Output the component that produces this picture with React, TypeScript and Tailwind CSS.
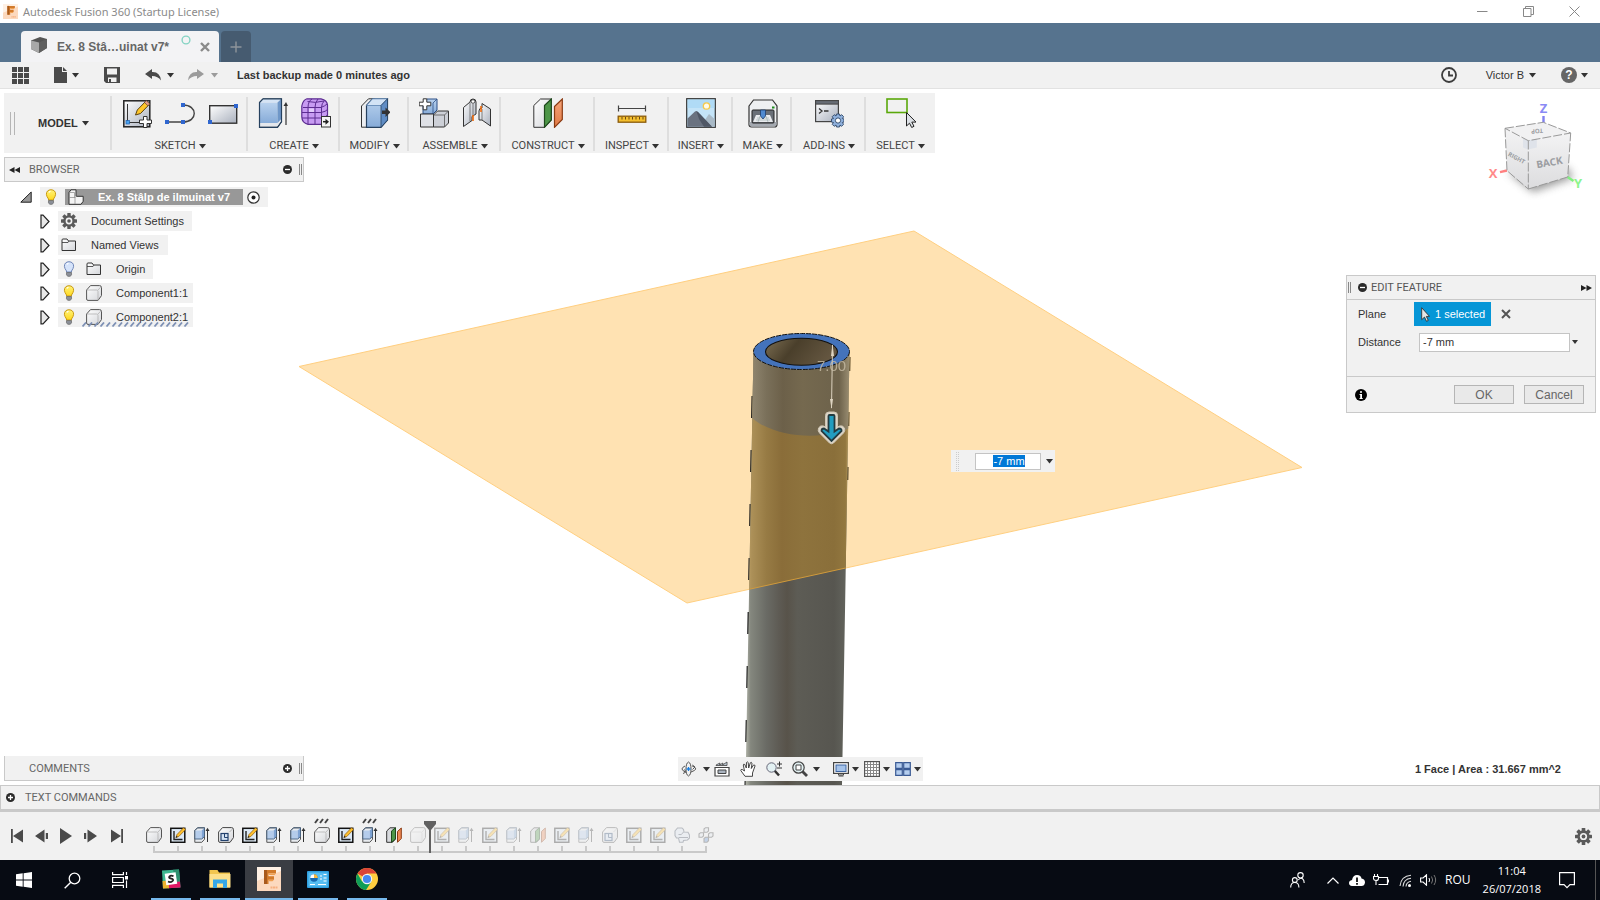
import type { ReactNode } from "react";

const CAPS = "font-['Roboto',sans-serif] text-[11px] leading-[14px]";

type IconProps = { w: number; h?: number; className?: string; children: ReactNode };

function Icon({ w, h = w, className = "", children }: IconProps) {
  return (
    <svg width={w} height={h} viewBox={`0 0 ${w} ${h}`} fill="none" aria-hidden="true" className={`shrink-0 ${className}`}>
      {children}
    </svg>
  );
}

function Caret({ className = "text-[#333]" }: { className?: string }) {
  return (
    <Icon w={7} h={5} className={className}>
      <path d="M0 0h7L3.5 4.5z" fill="currentColor" />
    </Icon>
  );
}

function Gear({ size = 16, color = "#5a5a5a", hole = "#f1f1f1" }) {
  return (
    <svg width={size} height={size} viewBox="0 0 16 16" aria-hidden="true" className="shrink-0">
      <g fill={color}>
        <circle cx="8" cy="8" r="5.8" />
        {[0, 45, 90, 135].map((a) => (
          <rect key={a} x="6.3" y="0" width="3.4" height="16" rx="0.5" transform={`rotate(${a} 8 8)`} />
        ))}
      </g>
      <circle cx="8" cy="8" r="3.4" fill={hole} />
      <circle cx="8" cy="8" r="1.8" fill={color} />
    </svg>
  );
}

function Gradients() {
  return (
    <svg width="0" height="0" className="absolute" aria-hidden="true">
      <defs>
        <linearGradient id="silver" x1="0" y1="0" x2="1" y2="1">
          <stop offset="0" stopColor="#ffffff" />
          <stop offset="1" stopColor="#a9b0bd" />
        </linearGradient>
        <linearGradient id="pale" x1="0" y1="0" x2="1" y2="1">
          <stop offset="0" stopColor="#ffffff" />
          <stop offset="1" stopColor="#d4d6da" />
        </linearGradient>
        <linearGradient id="blueFace" x1="0" y1="0" x2="0" y2="1">
          <stop offset="0" stopColor="#b9d2ee" />
          <stop offset="1" stopColor="#86abd8" />
        </linearGradient>
        <linearGradient id="orangeFace" x1="0" y1="0" x2="0" y2="1">
          <stop offset="0" stopColor="#f6a57a" />
          <stop offset="1" stopColor="#e07a45" />
        </linearGradient>
        <linearGradient id="bulbOn" x1="0" y1="0" x2="0" y2="1">
          <stop offset="0" stopColor="#fff27a" />
          <stop offset="1" stopColor="#ffd91f" />
        </linearGradient>
      </defs>
    </svg>
  );
}

/* ---------- Ribbon icons (30 x 30) ---------- */

function SketchIcon() {
  return (
    <Icon w={30}>
      <rect x="1.8" y="2.8" width="26" height="26" fill="url(#silver)" stroke="#222" strokeWidth="1.5" />
      <path d="M5.5 6v18M6 24.5h12" stroke="#333" />
      <rect x="4" y="22.5" width="3.5" height="3.5" fill="#4aa3f0" stroke="#1b5fae" strokeWidth=".7" />
      <path d="M13.5 17l1.8-5L24 3l3.5 3.2L18.5 15.5z" fill="#ffc629" stroke="#5a4310" />
      <path d="M22.5 4.500L24.200 2.500l3.600 3.400-1.800 1.900z" fill="#e8a08a" stroke="#5a3a2a" strokeWidth=".7" />
      <path d="M21.500 18.500h3.500V22h4.500v3.500H25v4h-3.500v-4H17.500V22h4z" fill="#fff" stroke="#333" />
    </Icon>
  );
}

function LineIcon() {
  return (
    <Icon w={30}>
      <path d="M2 24h16c15 0 15-17 0-17" stroke="#444" strokeWidth="1.4" />
      <path d="M0 22h4v4H0zM16 22h4v4h-4zM16 5h4v4h-4z" fill="#2f66cf" />
    </Icon>
  );
}

function RectIcon() {
  return (
    <Icon w={30}>
      <rect x="1.7" y="7.7" width="27" height="17.5" fill="url(#silver)" stroke="#333" strokeWidth="1.4" />
      <path d="M26 6h4v4h-4zM0 22h4v4H0z" fill="#2f66cf" />
    </Icon>
  );
}

function ExtrudeIcon() {
  return (
    <Icon w={30}>
      <path d="M1.500 4.500L5 .8h18.500v23L19.500 29.300h-18z" fill="#e4e7ec" stroke="#333" />
      <path d="M1.500 4.500h18v20.500h-18z" fill="url(#blueFace)" />
      <path d="M1.500 4.500L5 .8h18.500l-4 3.700z" fill="#d5e4f5" />
      <path d="M19.500 4.500l4-3.700v20l-4 4.200z" fill="#6f97c8" />
      <path d="M1.500 4.500L5 .8h18.500v23L19.500 29.300h-18z" stroke="#26415f" strokeWidth="1.2" />
      <path d="M28 27V6" stroke="#333" strokeWidth="1.2" />
      <path d="M25.500 8L28 4l2 4z" fill="#333" />
    </Icon>
  );
}

function FormIcon() {
  return (
    <Icon w={30}>
      <path d="M6 .8h14q6 1.200 6.500 6v12q-1.500 6-6 7.500H7Q1 25 .8 19V8Q2 2 6 .8z" fill="#c79bf2" stroke="#5c2d91" strokeWidth="1.2" />
      <path d="M2 9.500h18q4-1.500 6-3.500M1 14.500h19q5-1 6.500-3M1 20h19q5-1 6.500-3M6.500 3.500Q14 5.500 23 3M7 26V10q0-7 4-9M14 26V9.500Q14 4 17 1M20.500 26V9.500q0-4 3-7" stroke="#5c2d91" />
      <path d="M8 10.500h5v3.500H8z" fill="#e2ccfa" />
      <rect x="20.5" y="18.5" width="9" height="10.5" fill="#f5f5f5" stroke="#333" />
      <path d="M22 23.700h3" stroke="#222" strokeWidth="1.5" />
      <path d="M24.500 20.700l3.500 3-3.500 3z" fill="#222" />
    </Icon>
  );
}

function ModifyIcon() {
  return (
    <Icon w={30}>
      <path d="M1.500 8L8.500.8h6L9 8v21.200H1.500z" fill="#eceef1" stroke="#333" />
      <path d="M6.500 7.500L12.500.8h15V22l-6.500 7.300H6.500z" fill="url(#blueFace)" stroke="#26415f" strokeWidth="1.2" />
      <path d="M6.500 7.500L12.500.8h15L21 7.500z" fill="#d3e3f5" stroke="#5a81b0" strokeWidth=".8" />
      <path d="M21 7.500l6.500-6.700V22L21 29.300z" fill="#5f8cc4" stroke="#26415f" strokeWidth=".8" />
      <path d="M22 12.500h3.500v-3l5 4.700-5 4.800v-3H22z" fill="#333" />
    </Icon>
  );
}

function AssembleIcon() {
  return (
    <Icon w={30}>
      <path d="M4 5l4-4h10v11l-4 4H4z" fill="url(#blueFace)" stroke="#2c4f86" />
      <path d="M14 5l4-4M14 5v11" stroke="#2c4f86" strokeWidth=".8" />
      <path d="M1.500 16h13v13h-13z" fill="#dfe1e6" stroke="#333" />
      <path d="M14.500 17l4-4h11v12l-4 4h-11z" fill="#cdd0d7" stroke="#333" />
      <path d="M14.500 17h11l4-4M25.500 17v12" stroke="#555" strokeWidth=".8" />
      <path d="M4.200.8h3.600v3.400h4v3.600h-4v4H4.200v-4h-4V4.200h4z" fill="#fff" stroke="#333" />
    </Icon>
  );
}

function JointIcon() {
  return (
    <Icon w={30}>
      <path d="M1.500 9.500L8 4q0-3 3-3t3 3v12l-4 2.500v4L1.500 28.500z" fill="url(#silver)" stroke="#333" />
      <path d="M8 4v19M11 6v11" stroke="#666" strokeWidth=".8" />
      <circle cx="11" cy="3.5" r="1.8" fill="#fff" stroke="#333" strokeWidth=".8" />
      <path d="M11 17v6" stroke="#f26a0a" strokeWidth="1.6" />
      <path d="M17 13q0-3 3-3V5.500L28.500 11v17L20 22h-3z" fill="url(#silver)" stroke="#333" />
      <path d="M20 11v11" stroke="#666" strokeWidth=".8" />
      <path d="M19 8v6" stroke="#f26a0a" strokeWidth="1.6" />
    </Icon>
  );
}

function ConstructIcon() {
  return (
    <Icon w={30}>
      <path d="M.8 7.500L7.500 1h10.800v21l-6.800 7.300H.8z" fill="url(#pale)" stroke="#333" />
      <path d="M11.500 7.500L18.300 1v21l-6.800 7.300z" fill="#4d9648" stroke="#1f4a1d" strokeWidth="1.2" />
      <path d="M21.500 8.500L29.300 1v20.500l-7.800 7.800z" fill="url(#orangeFace)" stroke="#8a3a12" strokeWidth="1.2" />
    </Icon>
  );
}

function InspectIcon() {
  return (
    <Icon w={30}>
      <path d="M1.500 10.500h27M1.500 7.500v6M28.500 7.500v6" stroke="#444" strokeWidth="1.2" />
      <rect x="1.2" y="18.2" width="27.6" height="6" fill="#f4bf2e" stroke="#8a5a0a" strokeWidth="1.3" />
      <path d="M5 19v2.500M8.500 19v2.500M12 19v2.500M15.500 19v2.500M19 19v2.500M22.500 19v2.500M26 19v2.500" stroke="#6a4a10" />
    </Icon>
  );
}

function InsertIcon() {
  return (
    <Icon w={30}>
      <rect x=".7" y=".7" width="28.6" height="28.6" fill="#c4e4f8" stroke="#333" strokeWidth="1.2" />
      <path d="M1.500 1.500h27V10h-27z" fill="#a3d5f5" opacity=".6" />
      <circle cx="20.5" cy="8" r="3.2" fill="#fffbe8" stroke="#f5c84a" strokeWidth="1.3" />
      <path d="M14 29l9-13 5.500 5V29z" fill="#a9bac7" />
      <path d="M1.500 20.500L9 13.500q1.500-1 3 .5L26 28.700H1.500z" fill="#6a7280" />
      <path d="M10.500 13.500L13 21l5 7.700h8L12 14z" fill="#4f5765" />
    </Icon>
  );
}

function MakeIcon() {
  return (
    <Icon w={30}>
      <path d="M1 8l4.500-6h19L29 8v18.500q0 2.500-2.500 2.500h-23Q1 29 1 26.500z" fill="#eef0f2" stroke="#333" strokeWidth="1.2" />
      <path d="M1.500 24h27v2.500q0 2-2 2h-23q-2 0-2-2z" fill="#a4a9b0" />
      <rect x="4" y="12" width="22" height="13" rx="1" fill="#6a7078" stroke="#222" />
      <path d="M8 17h14l3 7H5z" fill="#e9ebee" />
      <path d="M9 20h12M8 22h14M12 18l-2 6M18 18l2 6" stroke="#9aa" strokeWidth=".6" />
      <path d="M12.500 12h5v6l-2.500 3-2.500-3z" fill="#4f8ad0" stroke="#1d3f70" strokeWidth=".8" />
      <rect x="24" y="8.5" width="2.5" height="2" fill="#1c8c1c" />
    </Icon>
  );
}

function AddinsIcon() {
  return (
    <Icon w={30}>
      <rect x="1.6" y="2.6" width="22.8" height="21" fill="url(#silver)" stroke="#444" strokeWidth="1.2" />
      <rect x="1.6" y="2.6" width="22.8" height="3.5" fill="#666c75" stroke="#444" />
      <path d="M5 10.500l3 2.500-3 2.500M10 13h4.500" stroke="#333" strokeWidth="1.3" />
      <g fill="#8fb0dc" stroke="#2c4668" strokeWidth=".9">
        <path d="M22.500 16h3l.5 2 1.700-1.300 2 2L28.300 20.500l1.700.5v3l-1.700.5 1.300 1.800-2 2L26 27l-.5 2h-3l-.5-2-1.800 1.300-2-2 1.300-1.800-2-.5v-3l2-.5-1.300-1.800 2-2L22 18z" />
        <circle cx="24" cy="22.5" r="2.6" fill="#fff" />
      </g>
    </Icon>
  );
}

function SelectIcon() {
  return (
    <Icon w={30}>
      <rect x="1" y="1" width="20" height="13.5" stroke="#5aa80a" strokeWidth="1.6" />
      <path d="M20.500 14.500V28l3-2.800 2.200 4.300 2.300-1.200-2.200-4.200H30z" fill="#dde1e6" stroke="#222" />
    </Icon>
  );
}

/* ---------- Timeline icons (16 x 16) ---------- */

function BodySmall() {
  return (
    <Icon w={16}>
      <path d="M.6 5L4.500.6h9q2 0 2 2v8L12 15.400H2Q.6 15.400.6 14z" fill="url(#pale)" stroke="#555" />
      <path d="M.6 5h10q1.400 0 1.400 1.500v9M12 5l3.300-3.500" stroke="#aaa" strokeWidth=".7" />
    </Icon>
  );
}

function SketchSmall() {
  return (
    <Icon w={16}>
      <rect x=".8" y="1.3" width="14" height="14" fill="#dde9f5" stroke="#111" strokeWidth="1.5" />
      <path d="M4 4v8.500h8.500" stroke="#222" strokeWidth="1.4" />
      <path d="M6 10.500l1-3L13.500.8l2 1.800L8.800 9.500z" fill="#ffc02e" stroke="#8a5a0a" strokeWidth=".7" />
      <path d="M5.500 11l1-2.200 1.200 1.200z" fill="#222" />
    </Icon>
  );
}

function ExtrudeSmall() {
  return (
    <Icon w={16}>
      <path d="M.8 3.500L3.500.8h7v11.500L7.800 15.300h-7z" fill="#e8ebef" stroke="#555" />
      <path d="M1.300 3.500h6.500v8.500H1.300z" fill="#b4cceb" />
      <path d="M7.800 3.500L10.500.8v8.700L7.800 12z" fill="#7ea3d3" />
      <path d="M.8 12V3.500L3.500.8h7V9.500L7.800 12z" stroke="#46617f" strokeWidth=".9" />
      <path d="M13.500 15V3" stroke="#333" />
      <path d="M11.500 4l2-3.300 2 3.300z" fill="#333" />
    </Icon>
  );
}

function ShellSmall() {
  return (
    <Icon w={16}>
      <path d="M.6 5L4.500.6h9q2 0 2 2v8L12 15.400H2Q.6 15.400.6 14z" fill="url(#pale)" stroke="#444" />
      <path d="M11.500 5l3.500-3.500" stroke="#999" strokeWidth=".7" />
      <rect x="3" y="6.5" width="7" height="7" fill="#d5e3f3" stroke="#22406c" strokeWidth="1.2" />
      <path d="M6.500 7v3.500H10" stroke="#22406c" />
    </Icon>
  );
}

function ConstructSmall() {
  return (
    <Icon w={16}>
      <path d="M.7 4L4 .8h5.500V12L6.500 15.300H.7z" fill="#d8dade" stroke="#333" />
      <path d="M5.500 4L9.500.8V12l-4 3.300z" fill="#4d9648" stroke="#1f4a1d" />
      <path d="M11.500 4.500L15.300 1v10.500l-3.800 3.800z" fill="#ee8a56" stroke="#8a3a12" />
    </Icon>
  );
}

function CombineSmall() {
  return (
    <Icon w={16}>
      <path d="M1 4l2.500-3h4.500q2 1 2 4l4 .3 1.500 2.700v3l-2 2-4 .5L9 15.300H5.500L4.500 11H2.500L1 8.500z" fill="#dce6f3" stroke="#3a4658" strokeWidth="1.1" />
      <path d="M4.500 7.500q3 1.500 5-2.500M5 10.500h9" stroke="#3a4658" />
    </Icon>
  );
}

function PatternSmall() {
  return (
    <Icon w={16}>
      <g fill="#e2e8f0" stroke="#333" strokeWidth="1.1">
        <path d="M6 2l1.500-1.300h3V4L9 5.300H6z" />
        <path d="M1 7l1.500-1.300h3V9L4 10.300H1z" />
        <path d="M10.500 7L12 5.700h3V9l-1.500 1.300h-3z" />
        <path d="M6 11.500l1.500-1.300h3v3.500L9 15.300H6z" fill="#5f8ed0" />
      </g>
    </Icon>
  );
}

const FEATURES = {
  body: BodySmall,
  sketch: SketchSmall,
  extrude: ExtrudeSmall,
  shell: ShellSmall,
  construct: ConstructSmall,
  combine: CombineSmall,
  pattern: PatternSmall,
};

const TIMELINE: { kind: keyof typeof FEATURES; dashed?: boolean; marker?: boolean; faded?: boolean }[] = [
  { kind: "body" },
  { kind: "sketch" },
  { kind: "extrude" },
  { kind: "shell" },
  { kind: "sketch" },
  { kind: "extrude" },
  { kind: "extrude" },
  { kind: "body", dashed: true },
  { kind: "sketch" },
  { kind: "extrude", dashed: true },
  { kind: "construct" },
  { kind: "body", faded: true, marker: true },
  { kind: "sketch", faded: true },
  { kind: "extrude", faded: true },
  { kind: "sketch", faded: true },
  { kind: "extrude", faded: true },
  { kind: "construct", faded: true },
  { kind: "sketch", faded: true },
  { kind: "extrude", faded: true },
  { kind: "shell", faded: true },
  { kind: "sketch", faded: true },
  { kind: "sketch", faded: true },
  { kind: "combine", faded: true },
  { kind: "pattern", faded: true },
];

/* ---------- Header ---------- */

function FusionLogo({ size }: { size: number }) {
  return (
    <svg width={size} height={size} viewBox="0 0 24 24" aria-hidden="true" className="shrink-0">
      <rect width="24" height="24" fill="#fef0e4" />
      <path d="M0 14L24 4v20H0z" fill="#fbcfae" opacity=".7" />
      <path d="M7 3h12v3.500h-7.500V9.300H17v3.500h-5.500V17H7z" fill="#d27a2a" />
      <path d="M7 3h3v14H7z" fill="#a85a1c" />
      <path d="M11.500 6.500H19l-1.500 1.500h-6zM11.500 12.800H17L15.500 14.300h-4z" fill="#f0a050" />
      <path d="M13.500 19.500h2v2h-2zM16 19.500h2v2h-2zM18.500 19.500h2v2h-2z" fill="#f6b080" />
    </svg>
  );
}

function TitleBar() {
  return (
    <header className="flex h-[23px] items-center bg-white pl-[3px]">
      <FusionLogo size={15} />
      <h1 className="ml-[5px] flex-1 font-['Noto_Sans',sans-serif] text-[11px] leading-4 text-[#8a8a8a]">
        Autodesk Fusion 360 (Startup License)
      </h1>
      <div className="flex pr-[3px]">
        <button aria-label="Minimize" className="flex h-5 w-[46px] items-center justify-center">
          <Icon w={11}><path d="M0 5.500h10.500" stroke="#888" /></Icon>
        </button>
        <button aria-label="Restore" className="flex h-5 w-[46px] items-center justify-center">
          <Icon w={11}><path d="M.5 2.500h7.500v8H.5zM2.500 2.500v-2h8v8H8" stroke="#888" /></Icon>
        </button>
        <button aria-label="Close" className="flex h-5 w-[46px] items-center justify-center">
          <Icon w={11}><path d="M.5.500l10 10M10.500.500l-10 10" stroke="#888" /></Icon>
        </button>
      </div>
    </header>
  );
}

function TabBar() {
  return (
    <div className="flex h-[39px] items-end gap-0.5 bg-[#56738e] pl-[21px]">
      <div className="flex h-[31px] w-[198px] items-center rounded-t bg-[#f3f3f5] pl-[10px] pr-2">
        <Icon w={16} className="mb-1">
          <path d="M0 3.500L9 0l7 2v9l-8 5-8-4z" fill="#555" />
          <path d="M0 3.500l8 2V16l-8-4z" fill="#a8a8a8" />
          <path d="M8 5.500L16 2v9l-8 5z" fill="#5f5f5f" />
        </Icon>
        <span className="ml-[10px] flex-1 whitespace-nowrap text-xs font-bold text-[#666]">Ex. 8 Stâ…uinat v7*</span>
        <Icon w={10} className="mb-[14px] mr-2"><circle cx="5" cy="5" r="3.9" stroke="#85d3c3" strokeWidth="1.4" /></Icon>
        <button aria-label="Close tab">
          <Icon w={12}><path d="M2 2l8 8M10 2l-8 8" stroke="#8a8a8a" strokeWidth="2.4" /></Icon>
        </button>
      </div>
      <button aria-label="New tab" className="flex h-[31px] w-[30px] items-center justify-center rounded-t bg-[#465b70]">
        <Icon w={12}><path d="M6 .5v11M.5 6h11" stroke="#8f959b" strokeWidth="1.4" /></Icon>
      </button>
    </div>
  );
}

function QuickBar() {
  return (
    <div className="flex h-[27px] items-center border-b border-[#e2e2e2] bg-[#f1f1f1] px-3 text-[11px] text-[#333]">
      <button aria-label="Data panel">
        <Icon w={17}><path d="M0 0h5v5H0zM6 0h5v5H6zM12 0h5v5h-5zM0 6h5v5H0zM6 6h5v5H6zM12 6h5v5h-5zM0 12h5v5H0zM6 12h5v5H6zM12 12h5v5h-5z" fill="#4a4a4a" /></Icon>
      </button>
      <button aria-label="File" className="ml-[25px] flex items-center gap-[5px]">
        <Icon w={13} h={16}><path d="M0 0h8v5h5v11H0zM9 0l4 4H9z" fill="#4a4a4a" /></Icon>
        <Caret />
      </button>
      <button aria-label="Save" className="ml-[25px]">
        <Icon w={16}><path d="M0 0h16v16H2l-2-2zM3 1.500v6h10v-6zM4 10.500v4.500h8.500v-4.500z" fill="#4a4a4a" fillRule="evenodd" /><path d="M5 12h2v3H5z" fill="#4a4a4a" /></Icon>
      </button>
      <button aria-label="Undo" className="ml-[25px] flex items-center gap-1.5">
        <Icon w={16} h={12}><path d="M0 5L7 0v3q8-.5 9 8.500Q13 7 7 7v3z" fill="#4a4a4a" /></Icon>
        <Caret />
      </button>
      <button aria-label="Redo" className="ml-[14px] flex items-center gap-[7px]">
        <Icon w={16} h={12}><path d="M16 5L9 0v3Q1 2.500 0 11.500 3 7 9 7v3z" fill="#9b9b9b" /></Icon>
        <Caret className="text-[#9b9b9b]" />
      </button>
      <p className="ml-[19px] flex-1 font-bold">Last backup made 0 minutes ago</p>
      <button aria-label="Job status">
        <Icon w={16}><circle cx="8" cy="8" r="7" stroke="#3d3d3d" strokeWidth="1.8" /><path d="M8 4v4.500h4" stroke="#3d3d3d" strokeWidth="1.8" /></Icon>
      </button>
      <button className="ml-[29px] flex items-center gap-[5px]">Victor B<Caret /></button>
      <button aria-label="Help" className="ml-[25px] flex items-center gap-1">
        <span className="flex size-4 items-center justify-center rounded-full bg-[#666] text-xs font-bold text-white">?</span>
        <Caret />
      </button>
    </div>
  );
}

function Group({ label, width, icons }: { label: string; width: string; icons: ReactNode[] }) {
  return (
    <div className={`relative flex flex-col items-center justify-between pt-[5px] after:absolute after:right-0 after:top-1 after:h-[54px] after:w-0.5 after:bg-[#dedede] last:after:hidden ${width}`}>
      <div className="flex gap-[13px]">
        {icons.map((icon, i) => (
          <button key={i} aria-label={`${label} tool ${i + 1}`}>{icon}</button>
        ))}
      </div>
      <button className={`flex items-center gap-[3px] text-[#444] ${CAPS}`}>
        {label}
        <Caret />
      </button>
    </div>
  );
}

function Ribbon() {
  return (
    <nav aria-label="Toolbar" className="flex h-[60px] w-fit bg-[#f1f1f1]">
      <div className="my-[3px] flex w-[108px] items-center border-r-2 border-[#dedede] pl-1.5">
        <span className="h-[23px] w-[5px] border-x border-[#b5b5b5]" />
        <button className="ml-[23px] flex items-center gap-1 text-[11px] font-bold text-[#333]">MODEL<Caret /></button>
      </div>
      <Group label="SKETCH" width="w-[136px]" icons={[<SketchIcon />, <LineIcon />, <RectIcon />]} />
      <Group label="CREATE" width="w-[92px]" icons={[<ExtrudeIcon />, <FormIcon />]} />
      <Group label="MODIFY" width="w-[69px]" icons={[<ModifyIcon />]} />
      <Group label="ASSEMBLE" width="w-[92px]" icons={[<AssembleIcon />, <JointIcon />]} />
      <Group label="CONSTRUCT" width="w-[94px]" icons={[<ConstructIcon />]} />
      <Group label="INSPECT" width="w-[74px]" icons={[<InspectIcon />]} />
      <Group label="INSERT" width="w-[64px]" icons={[<InsertIcon />]} />
      <Group label="MAKE" width="w-[59px]" icons={[<MakeIcon />]} />
      <Group label="ADD-INS" width="w-[74px]" icons={[<AddinsIcon />]} />
      <Group label="SELECT" width="w-[69px]" icons={[<SelectIcon />]} />
    </nav>
  );
}

/* ---------- Browser tree ---------- */

function RoundSign({ plus = false }: { plus?: boolean }) {
  return (
    <Icon w={9}>
      <circle cx="4.5" cy="4.5" r="4.5" fill="#2b2b2b" />
      <path d={plus ? "M2 4.5h5M4.5 2v5" : "M2 4.5h5"} stroke="#fff" strokeWidth="1.3" />
    </Icon>
  );
}

function Grip() {
  return <span className="h-[11px] w-[3px] border-x border-[#888]" />;
}

function Bulb({ on = true }: { on?: boolean }) {
  return (
    <Icon w={12} h={16}>
      <path d="M6 .7q4.600.3 4.600 4.600Q10.400 7.500 8.500 10v1h-5v-1Q1.600 7.500 1.400 5.300 1.400 1 6 .7z" fill={on ? "url(#bulbOn)" : "#d5e3fa"} stroke={on ? "#c99a12" : "#6f86b8"} />
      <path d="M3.500 11.500h5v2.300L7.300 15.300H4.700L3.500 13.800z" fill="#8b8f98" stroke="#555" strokeWidth=".6" />
      <path d="M4 3.500q.5-1 1.500-1.300" stroke="#fff" strokeWidth="1.2" />
    </Icon>
  );
}

function Folder() {
  return (
    <Icon w={16} h={14}>
      <path d="M1 12.500V2q0-1 1-1h4l1.500 2H14.500v9.500z" fill="url(#pale)" stroke="#333" />
      <path d="M1 4.500h6L8 3" stroke="#333" strokeWidth=".8" />
    </Icon>
  );
}

function Expand() {
  return (
    <button aria-label="Expand" className="mr-2 flex w-[10px] justify-center">
      <Icon w={10} h={15}><path d="M1 1.200h2l6 6.300-6 6.300H1z" fill="#e8e8e8" stroke="#222" strokeWidth="1.2" /></Icon>
    </button>
  );
}

function TreeRow({ width, children }: { width: string; children: ReactNode }) {
  return (
    <li className="flex h-6 items-center">
      <Expand />
      <div className={`flex h-5 items-center bg-[#f1f1f1] ${width}`}>{children}</div>
    </li>
  );
}

function BrowserPanel() {
  return (
    <section className="w-[300px]">
      <div className="flex h-[25px] items-center border border-[#c9c9c9] bg-[#f1f1f1] pl-1 pr-px">
        <Icon w={11} h={6}><path d="M5.500 0v6L0 3zM11 0v6L5.500 3z" fill="#222" /></Icon>
        <h2 className={`ml-[9px] flex-1 text-[#666] ${CAPS}`}>BROWSER</h2>
        <button aria-label="Collapse browser" className="mr-[7px]"><RoundSign /></button>
        <Grip />
      </div>
      <ul className="pt-[3px] text-[11px] text-[#333]">
        <li className="flex h-6 items-center pl-4">
          <button aria-label="Collapse" className="mr-2">
            <Icon w={12}><path d="M.8 11.200L11.200 1v10.200z" fill="#999" stroke="#222" /></Icon>
          </button>
          <div className="flex h-5 w-[228px] items-center bg-[#f1f1f1] pl-[5px]">
            <Bulb />
            <div className="ml-2 flex h-4 w-[178px] items-center bg-[#989898] pl-[3px]">
              <Icon w={16}>
                <path d="M1 3.500L3 .8h5v6.500h7.200v5L13 15.300H1z" fill="#f4f4f4" stroke="#333" />
                <path d="M1 8.500h6V15M7 8.500l2-1.500M1 3.500h5.500V8.500" stroke="#888" strokeWidth=".7" />
              </Icon>
              <span className="ml-3.5 whitespace-nowrap font-bold text-white">Ex. 8 Stâlp de ilmuinat v7</span>
            </div>
            <button aria-label="Activate component" className="ml-1">
              <Icon w={13}><circle cx="6.5" cy="6.5" r="5.7" fill="#fff" stroke="#333" strokeWidth="1.2" /><circle cx="6.5" cy="6.5" r="2" fill="#222" /></Icon>
            </button>
          </div>
        </li>
        <li>
          <ul className="pl-9">
            <TreeRow width="w-[134px]">
              <span className="ml-[3px] mr-3.5"><Gear /></span>
              Document Settings
            </TreeRow>
            <TreeRow width="w-[110px]">
              <span className="ml-[3px] mr-3.5"><Folder /></span>
              Named Views
            </TreeRow>
            <TreeRow width="w-[95px]">
              <span className="ml-[5px] mr-[11px]"><Bulb on={false} /></span>
              <span className="mr-3.5"><Folder /></span>
              Origin
            </TreeRow>
            <TreeRow width="w-[135px]">
              <span className="ml-[5px] mr-[11px]"><Bulb /></span>
              <span className="mr-3.5"><BodySmall /></span>
              Component1:1
            </TreeRow>
            <TreeRow width="w-[135px]">
              <span className="ml-[5px] mr-[11px]"><Bulb /></span>
              <span className="relative flex items-center">
                <span className="mr-3.5"><BodySmall /></span>
                Component2:1
                <svg width="108" height="5" viewBox="0 0 108 5" className="absolute -bottom-0.5 -left-1" aria-hidden="true">
                  {Array.from({ length: 18 }, (_, i) => (
                    <path key={i} d={`M${i * 6 + 0.5} 4.5l3.5-4`} stroke="#7d90b5" strokeWidth="1.8" />
                  ))}
                </svg>
              </span>
            </TreeRow>
          </ul>
        </li>
      </ul>
    </section>
  );
}

/* ---------- Scene ---------- */

function Scene() {
  const body = "M753.500 351.500C753.500 361.500 775 369.700 801.500 369.700S849.500 361.500 849.500 351.500L842 785H745.500z";
  const planePoly = "914,231 1302,467.500 687,603 299,366.500";
  return (
    <svg viewBox="0 89 1600 696" preserveAspectRatio="xMidYMid slice" className="absolute inset-0 size-full" role="img" aria-label="Pipe model with offset plane">
      <defs>
        <linearGradient id="steel">
          <stop offset="0" stopColor="#b3b5aa" />
          <stop offset=".05" stopColor="#84877e" />
          <stop offset=".2" stopColor="#6a6b65" />
          <stop offset=".32" stopColor="#5e5b54" />
          <stop offset=".4" stopColor="#58534a" />
          <stop offset=".5" stopColor="#5d5c55" />
          <stop offset=".85" stopColor="#575650" />
          <stop offset=".96" stopColor="#62635c" />
          <stop offset="1" stopColor="#c0c1b9" />
        </linearGradient>
        <linearGradient id="gold">
          <stop offset="0" stopColor="#c4a66b" />
          <stop offset=".06" stopColor="#ac9058" />
          <stop offset=".2" stopColor="#977b44" />
          <stop offset=".35" stopColor="#8a6d39" />
          <stop offset=".55" stopColor="#8e733d" />
          <stop offset=".85" stopColor="#8a6f3a" />
          <stop offset=".96" stopColor="#92773f" />
          <stop offset="1" stopColor="#c0a262" />
        </linearGradient>
        <linearGradient id="khaki">
          <stop offset="0" stopColor="#a2977d" />
          <stop offset=".06" stopColor="#908670" />
          <stop offset=".2" stopColor="#7a705a" />
          <stop offset=".36" stopColor="#6c6049" />
          <stop offset=".55" stopColor="#75694f" />
          <stop offset=".9" stopColor="#6d624b" />
          <stop offset="1" stopColor="#9a8e72" />
        </linearGradient>
        <linearGradient id="bore" x1="0" y1="0" x2="1" y2=".3">
          <stop offset="0" stopColor="#7d6f53" />
          <stop offset=".45" stopColor="#4a3f2b" />
          <stop offset="1" stopColor="#645640" />
        </linearGradient>
        <clipPath id="inPlane"><polygon points={planePoly} /></clipPath>
        <clipPath id="aboveCut"><path d="M740 330H860V422C838 440 780 442 752 418H740z" /></clipPath>
      </defs>
      <polygon points={planePoly} fill="#ffe2b2" stroke="#ffcf80" />
      <path d="M752.500 396L745.500 785" stroke="#111" strokeWidth="2" strokeDasharray="22 32" />
      <path d="M849.500 357L847.300 480" stroke="#3a2a0a" strokeWidth="2" strokeDasharray="14 41" />
      <path d={body} fill="url(#steel)" />
      <path d={body} fill="url(#gold)" clipPath="url(#inPlane)" />
      <path d={body} fill="url(#khaki)" clipPath="url(#aboveCut)" />
      <path d="M749.500 589.200L845.700 568" stroke="#d09a3c" />
      <ellipse cx="801.5" cy="351.5" rx="48" ry="18" fill="#4473bb" stroke="#111" strokeWidth="1" strokeDasharray="5 1" />
      <ellipse cx="801.5" cy="351.7" rx="36" ry="13.5" fill="url(#bore)" stroke="#111" strokeWidth="1.1" />
      <path d="M832.500 345L831.500 408" stroke="#ddd3c0" />
      <path d="M832.500 344l1.500 12h-3zM831.500 409l-1.500-10h3z" fill="#ddd3c0" />
      <text x="817" y="371" fill="#c8bda6" opacity=".8" fontFamily="Liberation Sans, sans-serif" fontSize="15">7.00</text>
      <path d="M829 412h5q3.500 0 3.500 3.500v11.500l2-1q3-1 5 2 1 3-1 5l-10 10q-2 1.500-4 0l-10-10q-2-2-1-5 2-3 5-2l2 1v-11.500q0-3.500 3.500-3.500z" fill="#ddd6c8" stroke="#cfc6b5" />
      <path d="M829.500 415h4q1 0 1 1v15.500l4.500-3q3 0 2.500 2.500l-10 10-10-10q0-2.500 2.500-2.500l4.500 3V416q0-1 1-1z" fill="#219dc0" stroke="#233b40" strokeWidth="1.8" />
    </svg>
  );
}

function ViewCube() {
  return (
    <svg width="110" height="110" viewBox="1480 95 110 110" className="absolute right-2.5 top-1.5" role="img" aria-label="View cube">
      <defs>
        <filter id="soft" x="-30%" y="-30%" width="160%" height="160%"><feGaussianBlur stdDeviation="4" /></filter>
        <linearGradient id="cubeSide" x1="0" y1="0" x2="0" y2="1">
          <stop offset="0" stopColor="#f3f3f4" />
          <stop offset="1" stopColor="#dcdcde" />
        </linearGradient>
      </defs>
      <path d="M1508 172l25 20 40-14-5-10z" fill="#777" filter="url(#soft)" opacity=".75" />
      <path d="M1543.500 123v-7" stroke="#8080f0" strokeWidth="2.4" />
      <path d="M1507 170.500l-7 1.700" stroke="#ff8080" strokeWidth="2.4" />
      <path d="M1567.500 177l6 4" stroke="#80f080" strokeWidth="2.4" />
      <path d="M1505 128.300L1543.300 122.300 1570.700 133 1528.300 140.700z" fill="#f1f1f2" />
      <path d="M1505 128.300L1528.300 140.700V189L1507 170.700z" fill="url(#cubeSide)" />
      <path d="M1528.300 140.700L1570.700 133 1567.700 177 1528.300 189z" fill="url(#cubeSide)" />
      <path d="M1523 138.500l5.300 2 8.500-2v9l-8.500 2-5.300-2z" fill="#dfe3ea" />
      <path d="M1505 128.300L1543.300 122.300 1570.700 133 1528.300 140.700zM1505 128.300L1507 170.700 1528.300 189V140.700M1528.300 189L1567.700 177 1570.700 133" fill="none" stroke="#999" strokeDasharray="9 2" />
      <g fontFamily="Open Sans, sans-serif" fontWeight="700" fill="#9b9da1" textAnchor="middle">
        <text x="1549.5" y="166" fontSize="10" transform="rotate(-10 1549.5 163)">BACK</text>
        <text x="1516.5" y="160" fontSize="6" transform="rotate(28 1516.5 158)">RIGHT</text>
        <text x="1537" y="133" fontSize="6" transform="rotate(176 1537 131)">TOP</text>
      </g>
      <g fontFamily="Open Sans, sans-serif" fontSize="13" fontWeight="700" textAnchor="middle">
        <text x="1543.5" y="113" fill="#8a8af5">Z</text>
        <text x="1493" y="178" fill="#ff8a8a">X</text>
        <text x="1578" y="188" fill="#8cf58c">Y</text>
      </g>
    </svg>
  );
}

function EditFeature() {
  return (
    <form className="absolute right-1 top-[186px] w-[250px] border border-[#c9c9c9] bg-[#f1f1f1] text-[11px] text-[#333]" onSubmit={(e) => e.preventDefault()}>
      <div className="flex h-6 items-center border-b border-[#c9c9c9] pl-px pr-[3px]">
        <Grip />
        <span className="ml-[7px]"><RoundSign /></span>
        <h2 className={`ml-1 flex-1 text-[#555] ${CAPS}`}>EDIT FEATURE</h2>
        <Icon w={11} h={6}><path d="M0 0v6l5.500-3zM5.500 0v6L11 3z" fill="#222" /></Icon>
      </div>
      <div className="grid h-[76px] grid-cols-[56px_1fr] content-start gap-y-1 pl-[11px] pt-0.5">
        <span className="self-center">Plane</span>
        <div className="flex items-center">
          <button type="button" className="flex h-6 w-[77px] items-center gap-[5px] bg-[#0696d7] pl-[7px] text-white">
            <Icon w={9} h={15}><path d="M.7.700v12l2.800-2.600 2 4.200 1.800-.9-2-4h3.200z" fill="#e6e6e6" stroke="#333" strokeWidth=".9" /></Icon>
            1 selected
          </button>
          <button type="button" aria-label="Clear selection" className="ml-2.5">
            <Icon w={10}><path d="M1 1l8 8M9 1l-8 8" stroke="#555" strokeWidth="2" /></Icon>
          </button>
        </div>
        <label htmlFor="distance" className="self-center">Distance</label>
        <div className="flex h-6 items-center gap-0.5 pl-[5px]">
          <input id="distance" defaultValue="-7 mm" className="h-[19px] w-[151px] border border-[#c4c4c4] bg-white px-[3px] outline-none" />
          <Icon w={6} h={4}><path d="M0 0h6L3 4z" fill="#333" /></Icon>
        </div>
      </div>
      <div className="flex h-9 items-center gap-[10px] border-t border-[#c9c9c9] pl-2 pr-[11px]">
        <Icon w={12} className="mr-auto">
          <circle cx="6" cy="6" r="6" fill="#000" />
          <path d="M5 2.200h2v1.600H5zM4.500 5H7v4h.7v.9H4.500V9h.7V5.900h-.7z" fill="#fff" />
        </Icon>
        <button type="submit" className="h-[19px] w-[60px] border border-[#b5b5b5] bg-[#e9e9e9] text-xs leading-4 text-[#666]">OK</button>
        <button type="button" className="h-[19px] w-[60px] border border-[#b5b5b5] bg-[#e9e9e9] text-xs leading-4 text-[#666]">Cancel</button>
      </div>
    </form>
  );
}

function FloatingInput() {
  return (
    <div className="absolute left-[calc(50%+151px)] top-[361px] flex h-[22px] w-[104px] items-center bg-[#f1f1f1] text-[11px] text-[#333]">
      <span className="ml-[5px] h-[19px] w-[3px] border-x border-dotted border-[#ccc]" />
      <input
        aria-label="Offset distance"
        defaultValue="-7 mm"
        autoFocus
        onFocus={(e) => e.currentTarget.select()}
        className="ml-4 h-[17px] w-[66px] border border-[#c4c4c4] bg-white pl-0.5 text-center outline-none selection:bg-[#0078d7] selection:text-white"
      />
      <Caret className="ml-[5px] text-[#333]" />
    </div>
  );
}

/* ---------- Bottom of the canvas ---------- */

function NavBar() {
  return (
    <div className="flex h-6 w-[245px] items-center bg-[#f1f1f1] pl-[3px]">
      <button aria-label="Orbit" className="flex items-center gap-1.5">
        <Icon w={16}>
          <path d="M7.500 1q2.500 1 2.500 7t-2.500 7Q5 14 5 8t2.500-7z" stroke="#555" />
          <path d="M4 5Q-2 8 4 10.800M11 4.800q8 3.200-1 6.200M11.500 4l2.500 2-2.500 2.500M3.500 8.500L5 11l-3 1.500" stroke="#555" />
          <path d="M5.500 8h4M7.500 6v4" stroke="#1b7fe0" strokeWidth="1.3" />
        </Icon>
        <Caret />
      </button>
      <button aria-label="Look at" className="ml-1">
        <Icon w={16}>
          <path d="M1 15V6.500h14V15z" fill="#fff" stroke="#444" strokeWidth="1.2" />
          <path d="M2 4l4-2-.5 2L9 2l-.5 2L13 1v3.500H2z" fill="#bcc8d4" stroke="#444" strokeWidth=".8" />
          <path d="M4 9h8v3.500H4z" fill="#aab4c0" stroke="#444" />
        </Icon>
      </button>
      <button aria-label="Pan" className="ml-[10px]">
        <Icon w={16}>
          <path d="M5 15.300L.8 9.500q0-1.500 1.500-1L4.500 10 3.300 4q.3-1.500 1.500-.5L6.300 7 6.500 1.500Q7.300.2 8.200 1.500L8.700 7 10.300 1.800q1-1 1.700.2L11.300 7.500 13.500 4q1.500-.5 1.500 1L12.500 12v3.300z" fill="#fff" stroke="#333" strokeWidth=".9" />
        </Icon>
      </button>
      <button aria-label="Zoom" className="ml-[10px]">
        <Icon w={16}>
          <path d="M8.500 9.500l4.500 5" stroke="#333" strokeWidth="2.5" />
          <circle cx="5.5" cy="6.5" r="4.7" fill="#e3f1f3" stroke="#667" />
          <path d="M11 3h5M13.500.5v5M11 7h5" stroke="#333" />
        </Icon>
      </button>
      <button aria-label="Fit" className="ml-[10px] flex items-center gap-[5px]">
        <Icon w={16}>
          <path d="M10 10l5 5" stroke="#444" strokeWidth="2.8" />
          <circle cx="6.5" cy="6.5" r="5.7" fill="#e3f1f3" stroke="#444" strokeWidth="1.2" />
          <path d="M4 4h5v5H4z" fill="#fff" stroke="#444" />
        </Icon>
        <Caret />
      </button>
      <button aria-label="Display settings" className="ml-[13px] flex items-center gap-[3px]">
        <Icon w={16}>
          <rect x=".6" y="1.6" width="14.8" height="10.8" fill="#fff" stroke="#444" strokeWidth="1.2" />
          <rect x="3" y="4" width="10" height="6.5" fill="#a5c3ea" stroke="#3d64a0" />
          <path d="M5.500 12.500v1.500h5v-1.500M5.500 15h5" stroke="#444" />
        </Icon>
        <Caret />
      </button>
      <button aria-label="Grid and snaps" className="ml-[5px] flex items-center gap-[3px]">
        <Icon w={16}>
          <rect x=".6" y=".6" width="14.8" height="14.8" fill="#fff" stroke="#555" strokeWidth="1.2" />
          <path d="M3.500 1v14M6.500 1v14M9.500 1v14M12.500 1v14M1 3.500h14M1 6.500h14M1 9.500h14M1 12.500h14" stroke="#888" />
        </Icon>
        <Caret />
      </button>
      <button aria-label="Viewports" className="ml-[5px] flex items-center gap-[3px]">
        <Icon w={16}>
          <path d="M.7 1.700h6.600v5.600H.7zM8.700 1.700h6.600v5.600H8.700zM.7 8.700h6.600v5.600H.7zM8.700 8.700h6.600v5.600H8.700z" fill="#b4cdee" stroke="#3a5a94" strokeWidth="1.2" />
        </Icon>
        <Caret />
      </button>
    </div>
  );
}

function CanvasFooter() {
  return (
    <div className="relative grid grid-cols-[1fr_auto_1fr] items-end pb-1">
      <div className="ml-1 flex h-[25px] w-[300px] items-center border-x border-b border-[#c9c9c9] bg-[#f1f1f1] pl-6 pr-px pt-px">
        <h2 className={`flex-1 text-[#666] ${CAPS}`}>COMMENTS</h2>
        <button aria-label="Open comments" className="mr-[7px]"><RoundSign plus /></button>
        <Grip />
      </div>
      <NavBar />
      <p className="self-center pr-[39px] text-right text-[11px] font-bold leading-4 text-[#333]">1 Face | Area : 31.667 mm^2</p>
    </div>
  );
}

/* ---------- Timeline ---------- */

function Timeline() {
  return (
    <section aria-label="Timeline" className="flex h-12 items-start bg-[#f1f1f1] pl-[11px] pr-2">
      <div className="flex h-12 items-center text-[#4a4a4a]">
        <button aria-label="Go to start" className="mr-3"><Icon w={12} h={14}><path d="M0 0h1.800v14H0zM12 .5v13L2 7z" fill="currentColor" /></Icon></button>
        <button aria-label="Step back" className="mr-3"><Icon w={13} h={14}><path d="M9.500.5v13L0 7zM10.800 4H13v6h-2.200z" fill="currentColor" /></Icon></button>
        <button aria-label="Play" className="mr-3"><Icon w={12} h={16}><path d="M0 0l12 8-12 8z" fill="currentColor" /></Icon></button>
        <button aria-label="Step forward" className="mr-[14px]"><Icon w={13} h={14}><path d="M3.500.5v13L13 7zM0 4h2.200v6H0z" fill="currentColor" /></Icon></button>
        <button aria-label="Go to end"><Icon w={12} h={14}><path d="M10.200 0H12v14h-1.800zM0 .5v13L10 7z" fill="currentColor" /></Icon></button>
      </div>
      <div className="ml-[19px] pt-1.5">
        <ol className="flex">
          {TIMELINE.map(({ kind, dashed, marker, faded }, i) => {
            const Feature = FEATURES[kind];
            return (
              <li key={i} className="relative flex w-6 flex-col items-center">
                <span className="flex h-[9px] items-start">
                  {dashed && <Icon w={16} h={6}><path d="M1 5l3-4M6 5l3-4M11 5l3-4" stroke="#444" strokeWidth="2" /></Icon>}
                </span>
                <button aria-label={`${kind} ${i + 1}`} className={faded ? "opacity-30" : ""}><Feature /></button>
                <span className="mt-[3px] h-[5px] w-0.5 bg-[#c9c9c9]" />
                {marker && (
                  <Icon w={12} h={33} className="absolute -right-1.5 top-[3px] z-10">
                    <path d="M0 0h12v3L7 9v23H5V9L0 3z" fill="#616161" />
                  </Icon>
                )}
              </li>
            );
          })}
        </ol>
        <div className="mx-[11px] h-0.5 bg-[#c9c9c9]" />
      </div>
      <button aria-label="Timeline settings" className="ml-auto self-center"><Gear size={17} /></button>
    </section>
  );
}

/* ---------- Taskbar ---------- */

function TaskButton({ label, active = false, children }: { label: string; active?: boolean; children: ReactNode }) {
  return (
    <button aria-label={label} className={`flex h-10 w-12 flex-col items-center ${active ? "bg-[#3a3d43]" : ""}`}>
      <span className="flex flex-1 items-center">{children}</span>
      <span className={`h-0.5 bg-[#76b9ed] ${active ? "w-12" : "w-10"}`} />
    </button>
  );
}

function Taskbar() {
  return (
    <footer className="flex h-10 items-center bg-[#070b13] font-['Open_Sans',sans-serif] text-[11px] leading-4 text-white">
      <button aria-label="Start" className="flex h-10 w-12 items-center justify-center">
        <Icon w={16}><path d="M0 2.300L6.700 1.300V7.500H0zM7.600 1.200L16 0v7.500H7.600zM0 8.500h6.700v6.200L0 13.700zM7.600 8.500H16V16l-8.400-1.200z" fill="#fff" /></Icon>
      </button>
      <button aria-label="Search" className="flex h-10 w-12 items-center justify-center">
        <Icon w={17}><circle cx="10.5" cy="6.5" r="5.3" stroke="#fff" strokeWidth="1.3" /><path d="M6.800 10.200L.7 16.300" stroke="#fff" strokeWidth="1.4" /></Icon>
      </button>
      <button aria-label="Task view" className="flex h-10 w-12 items-center justify-center">
        <Icon w={17}><path d="M.6 0v2.600h10.800V0M.6 16v-2.600h10.800V16M.6 5.500h10.800v5H.6zM14.500 0v3M14.500 8.500V16" stroke="#fff" strokeWidth="1.2" /><path d="M13 4h3v3.500h-3z" fill="#fff" /></Icon>
      </button>
      <div className="ml-[3px] flex gap-px">
        <TaskButton label="Slack">
          <Icon w={20}>
            <path d="M1 1.500L18 .5l1.500 18L2 19.500z" fill="#3eb991" />
            <path d="M12 .8l6 -.3 1 12-4 .5z" fill="#2d8f6f" />
            <path d="M7 19.200l12.500-.7-.5-6-13 1.500z" fill="#e01765" />
            <path d="M1.500 12l6-.5.5 7.700-6 .3z" fill="#ecb22e" />
            <rect x="4.5" y="4" width="11" height="11.5" fill="#fff" transform="rotate(-8 10 10)" />
            <path d="M12.500 7.300q-2.500-1.500-4 0t1.700 2.300 1.300 2.500-4.500.5" stroke="#222" strokeWidth="1.7" />
          </Icon>
        </TaskButton>
        <TaskButton label="File Explorer">
          <Icon w={22} h={20}>
            <path d="M.5 1h8l1.500 2.500h11v15H.5z" fill="#f2c64f" />
            <path d="M.5 5h21v13.500H.5z" fill="#fde08a" />
            <path d="M4 19v-8.500h14V19h-4v-4.500H8V19z" fill="#33a5e6" />
          </Icon>
        </TaskButton>
        <TaskButton label="Fusion 360" active><FusionLogo size={24} /></TaskButton>
        <TaskButton label="Control Panel">
          <Icon w={22} h={17}>
            <rect width="22" height="17" rx="1" fill="#2f9fe0" />
            <rect x="1.5" y="1.5" width="19" height="14" fill="#56bdf2" />
            <circle cx="7" cy="7" r="3.8" fill="#1668b0" />
            <path d="M7 7V3.200A3.800 3.800 0 0110.800 7z" fill="#f6b73c" />
            <path d="M7 7H3.200A3.800 3.800 0 017 3.200z" fill="#fff" />
            <path d="M13 5h2M16.500 3.500h3M13 8h2M16.500 7h3M16.500 10h3M3 13.500h5M11 13.500h8" stroke="#fff" strokeWidth="1.2" />
          </Icon>
        </TaskButton>
        <TaskButton label="Chrome">
          <Icon w={22}>
            <circle cx="11" cy="11" r="11" fill="#ffcd40" />
            <path d="M11 11L1.500 5.500A11 11 0 0120.500 5.500H11z" fill="#db4437" />
            <path d="M1.500 5.500A11 11 0 0010 22l5.500-8.500L11 11 6 13.500z" fill="#0f9d58" />
            <circle cx="11" cy="11" r="5.2" fill="#f5f5f5" />
            <circle cx="11" cy="11" r="4.1" fill="#4688f1" />
          </Icon>
        </TaskButton>
      </div>
      <div className="ml-auto flex items-center">
        <button aria-label="People" className="mr-[22px]">
          <Icon w={15} h={16}>
            <circle cx="10.5" cy="3.3" r="2.7" stroke="#fff" strokeWidth="1.1" />
            <circle cx="4.8" cy="8" r="2.4" stroke="#fff" strokeWidth="1.1" />
            <path d="M.7 15.500q0-5 4.100-5t4.100 5M8.300 8q2-2.500 4.300-1.300Q14.200 8 14.200 11" stroke="#fff" strokeWidth="1.1" />
          </Icon>
        </button>
        <button aria-label="Show hidden icons" className="mr-[10px]"><Icon w={12} h={7}><path d="M.5 6.500L6 1l5.500 5.500" stroke="#fff" strokeWidth="1.2" /></Icon></button>
        <Icon w={16} h={11} className="mr-2">
          <path d="M3 11Q0 10.500 0 8t3-3Q4 0 8 0t4.500 3.500Q16 4 16 7.500 15.500 11 12.500 11z" fill="#fff" />
          <path d="M8 2.500V7M8 8v1.700" stroke="#111" strokeWidth="1.8" />
        </Icon>
        <Icon w={16} h={12} className="mr-[10px]">
          <path d="M5.500 3.500h9v7h-9M15.500 5.500v3" stroke="#fff" strokeWidth="1.2" />
          <path d="M1.500 0v2M4.500 0v2M.5 2.500h5v2q0 2-2.500 2t-2.500-2zM3 6.500V11" stroke="#fff" strokeWidth="1.1" />
        </Icon>
        <Icon w={13} className="mr-2">
          <circle cx="10.5" cy="11.5" r="1.5" fill="#fff" />
          <path d="M1 12Q2 2 12 1.200M4 12.500Q4.500 5 12 4.200M7 12.500q.3-4.500 5-5.300" stroke="#ddd" strokeWidth="1.1" />
        </Icon>
        <Icon w={17} h={12} className="mr-2">
          <path d="M.6 4h2.500L6.500.8v10.400L3.100 8H.6z" stroke="#fff" strokeWidth="1.1" />
          <path d="M9 4q1.200 2 0 4" stroke="#fff" />
          <path d="M11.500 2.500q2.300 3.500 0 7M14 1q3.300 5 0 10" stroke="#777" />
        </Icon>
        <span className="mr-3 text-xs">ROU</span>
        <time className="flex flex-col items-center gap-0.5"><span>11:04</span><span>26/07/2018</span></time>
        <button aria-label="Notifications" className="ml-[18px] mr-5">
          <Icon w={16} h={17}><path d="M.6.600h14.800v12h-4.400l-3 3-3-3H.6z" stroke="#fff" strokeWidth="1.2" /></Icon>
        </button>
        <span className="h-10 w-[5px] border-l border-[#555]" />
      </div>
    </footer>
  );
}

export default function App() {
  return (
    <div className="flex min-h-screen flex-col bg-white font-['Liberation_Sans',Arial,sans-serif]">
      <Gradients />
      <TitleBar />
      <TabBar />
      <QuickBar />
      <main className="relative flex flex-1 flex-col overflow-hidden pt-1">
        <Scene />
        <ViewCube />
        <div className="relative flex flex-1 flex-col gap-1 pl-1">
          <Ribbon />
          <BrowserPanel />
        </div>
        <EditFeature />
        <FloatingInput />
        <CanvasFooter />
      </main>
      <div className="flex h-[27px] items-center border-x border-t border-b-3 border-[#c9c9c9] bg-[#f1f1f1] pl-[5px]">
        <button aria-label="Open text commands"><RoundSign plus /></button>
        <h2 className={`ml-2.5 text-[#666] ${CAPS}`}>TEXT COMMANDS</h2>
      </div>
      <Timeline />
      <Taskbar />
    </div>
  );
}
